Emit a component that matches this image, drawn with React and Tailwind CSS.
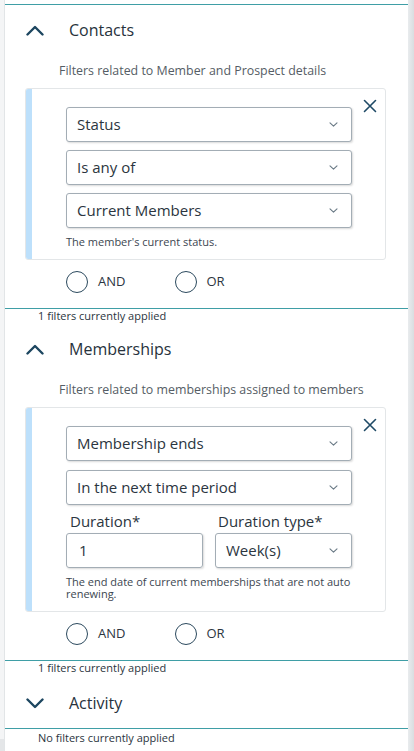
import React from "react";

const TEAL = "border-[#3f9ea6]";

function ChevronUp() {
  return (
    <svg width="18" height="11" viewBox="0 0 18 11" fill="none">
      <path d="M1.5 9.5L9 2L16.5 9.5" stroke="#1d4660" strokeWidth="2.4" strokeLinecap="round" strokeLinejoin="round" />
    </svg>
  );
}
function ChevronDown() {
  return (
    <svg width="18" height="11" viewBox="0 0 18 11" fill="none">
      <path d="M1.5 1.5L9 9L16.5 1.5" stroke="#1d4660" strokeWidth="2.4" strokeLinecap="round" strokeLinejoin="round" />
    </svg>
  );
}
function SmallChevron() {
  return (
    <svg width="9" height="5" viewBox="0 0 9 5" fill="none">
      <path d="M1 0.8L4.5 4.2L8 0.8" stroke="#6a7a86" strokeWidth="1.1" strokeLinecap="round" strokeLinejoin="round" />
    </svg>
  );
}
function CloseX() {
  return (
    <svg width="14" height="14" viewBox="0 0 14 14" fill="none">
      <path d="M1.5 1.5L12.5 12.5M12.5 1.5L1.5 12.5" stroke="#1f4a66" strokeWidth="1.6" strokeLinecap="round" />
    </svg>
  );
}

function Select({ value, className = "" }) {
  return (
    <div className={`h-[35px] flex items-center justify-between pl-[10px] pr-[13px] border border-[#a3adb5] rounded-[3px] bg-white shadow-[1px_1px_2px_rgba(0,0,0,0.15)] ${className}`}>
      <span className="text-[15px] text-[#2b3540] leading-none">{value}</span>
      <SmallChevron />
    </div>
  );
}

function Card({ children, helper }) {
  return (
    <div className="ml-[20px] mr-[22px] relative flex border border-[#e3e6e8] rounded-[3px] bg-white">
      <div className="w-[6px] bg-[#bde0fb] rounded-l-[2px]" />
      <div className="flex-1 pl-[34px] pr-[33px] pt-[18px] pb-[11px]">
        {children}
        <p className="mt-[8px] text-[11px] leading-[12px] text-[#3c4650]">{helper}</p>
      </div>
      <div className="absolute right-[8px] top-[10px]">
        <CloseX />
      </div>
    </div>
  );
}

function Radios() {
  return (
    <div className="ml-[61px] mt-[11px] mb-[15px] h-[22px] flex items-center">
      <div className="w-[22px] h-[22px] rounded-full border-[1.5px] border-[#2c4a5e]" />
      <span className="ml-[10px] text-[13px] text-[#2b3540]">AND</span>
      <div className="ml-[50px] w-[22px] h-[22px] rounded-full border-[1.5px] border-[#2c4a5e]" />
      <span className="ml-[9px] text-[13px] text-[#2b3540]">OR</span>
    </div>
  );
}

function Header({ title, open = true, tall = false }) {
  return (
    <div className={`${tall ? "h-[52px] pt-[2px]" : "h-[50px]"} flex items-center pl-[21px]`}>
      <div className="w-[18px] flex justify-center">{open ? <ChevronUp /> : <ChevronDown />}</div>
      <span className="ml-[25px] text-[16px] text-[#27323c]">{title}</span>
    </div>
  );
}

function Status({ text, low = false }) {
  return (
    <div className={`border-t-[1.5px] ${TEAL} ${low ? "h-[20px]" : "h-[16px]"} flex items-center pl-[33px] text-[11px] text-[#2b3540]`}>
      {text}
    </div>
  );
}

function Desc({ text }) {
  return <div className="h-[33px] flex items-center pl-[54px] text-[12.4px] text-[#555d65]">{text}</div>;
}

export default function App() {
  return (
    <div className="w-[414px] h-[751px] flex overflow-hidden bg-white" style={{ fontFamily: '"Open Sans", sans-serif' }}>
      <div className="w-[4px] flex flex-col">
        <div className="flex-1 bg-[#f4f5f6]" />
        <div className="h-[12px] bg-[#e4e6e8]" />
      </div>
      <div className="w-[1px] bg-[#e2e5e7]" />
      <div className="flex-1 flex flex-col bg-white pt-[4px]">
        <div className={`border-t-[1.5px] ${TEAL}`}>
          <Header title="Contacts" />
          <Desc text="Filters related to Member and Prospect details" />
          <Card helper="The member's current status.">
            <div className="flex flex-col gap-[8px]">
              <Select value="Status" />
              <Select value="Is any of" />
              <Select value="Current Members" />
            </div>
          </Card>
          <Radios />
        </div>
        <Status text="1 filters currently applied" />
        <Header title="Memberships" />
        <Desc text="Filters related to memberships assigned to members" />
        <Card helper="The end date of current memberships that are not auto renewing.">
          <div className="flex flex-col gap-[9px]">
            <Select value="Membership ends" />
            <Select value="In the next time period" />
          </div>
          <div className="flex gap-[12px] mt-[4px]">
            <div className="flex-1">
              <div className="h-[24px] flex items-center pl-[4px] text-[15px] text-[#2b3540]">Duration*</div>
              <div className="h-[35px] flex items-center pl-[12px] border border-[#a3adb5] rounded-[3px] shadow-[1px_1px_2px_rgba(0,0,0,0.15)] text-[15px] text-[#2b3540]">1</div>
            </div>
            <div className="flex-1">
              <div className="h-[24px] flex items-center pl-[3px] text-[15px] text-[#2b3540]">Duration type*</div>
              <Select value="Week(s)" />
            </div>
          </div>
        </Card>
        <Radios />
        <Status text="1 filters currently applied" />
        <Header title="Activity" open={false} tall />
        <Status text="No filters currently applied" low />
        <div className="flex-1" />
      </div>
      <div className="w-[6px] bg-gradient-to-r from-[#e9ecee] to-[#d9dde0]" />
    </div>
  );
}
